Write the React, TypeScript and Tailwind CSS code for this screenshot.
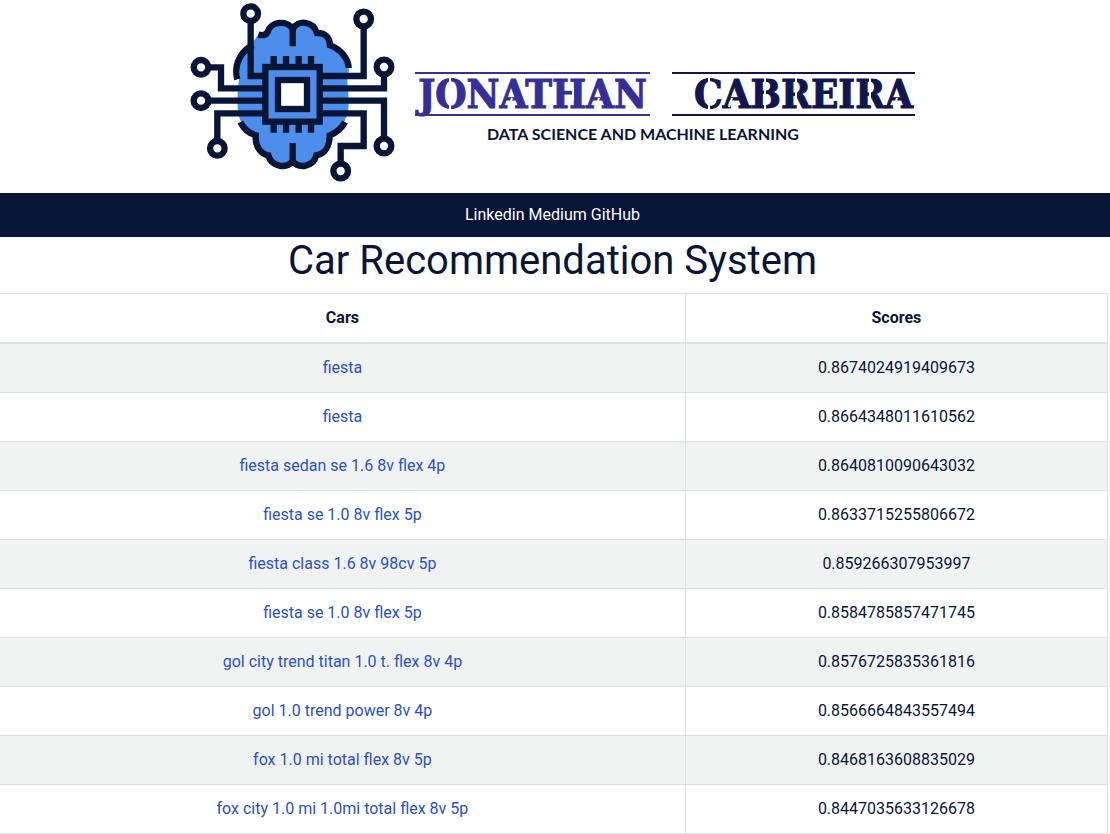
const cars: { name: string; score: string }[] = [
  { name: "fiesta", score: "0.8674024919409673" },
  { name: "fiesta", score: "0.8664348011610562" },
  { name: "fiesta sedan se 1.6 8v flex 4p", score: "0.8640810090643032" },
  { name: "fiesta se 1.0 8v flex 5p", score: "0.8633715255806672" },
  { name: "fiesta class 1.6 8v 98cv 5p", score: "0.859266307953997" },
  { name: "fiesta se 1.0 8v flex 5p", score: "0.8584785857471745" },
  { name: "gol city trend titan 1.0 t. flex 8v 4p", score: "0.8576725835361816" },
  { name: "gol 1.0 trend power 8v 4p", score: "0.8566664843557494" },
  { name: "fox 1.0 mi total flex 8v 5p", score: "0.8468163608835029" },
  { name: "fox city 1.0 mi 1.0mi total flex 8v 5p", score: "0.8447035633126678" },
];

const nodes: [number, number][] = [
  [197, 41],
  [536, 57],
  [597, 201],
  [48, 202],
  [48, 302],
  [97, 445],
  [467, 513],
  [597, 438],
];

function BrainLogo() {
  return (
    <svg className="h-[190px] w-[215px] shrink-0" viewBox="0 0 645 570" fill="none" aria-hidden="true">
      <path
        fill="#4d8dec"
        d="M210 118C225 92 240 100 252 88C268 60 308 62 323 86C340 62 378 62 392 96C414 94 430 112 434 136C464 146 492 180 492 214C482 235 490 255 491 300C492 340 484 350 476 370C464 390 450 400 434 408C434 440 418 460 394 466C386 500 342 502 323 480C304 502 260 500 252 466C226 460 212 440 212 408C190 398 166 368 162 350C154 325 158 260 164 225C158 190 178 150 210 118Z"
      />
      <g stroke="#091536" strokeWidth="19">
        <path d="M220 104C236 108 244 104 248 96C256 64 308 58 323 88C338 58 384 62 396 99C420 98 434 112 435 136C464 146 490 174 491 204" />
        <path d="M323 84V139M205 135C172 150 144 190 157 238M323 429V486" />
        <path d="M166 366C176 386 192 400 212 406C210 438 226 462 250 466C258 500 304 508 323 484C342 508 386 500 394 466C420 462 434 438 434 406C454 398 470 386 480 366" />
        <path d="M197 68V228H240M405 228H536V84M405 265H597V228M75 202H108V265H240M75 302H240M97 418V340H240M405 340H536V438H467V486M405 302H597V411" />
        <path d="M266 168V200M303 168V200M341 168V200M378 168V200M266 368V398M303 368V398M341 368V398M378 368V398" />
        <rect x="241" y="201" width="163" height="164" fill="#4d8dec" />
        <rect x="279" y="240" width="87" height="87" fill="#fff" />
        {nodes.map(([cx, cy]) => (
          <circle key={`${cx}-${cy}`} cx={cx} cy={cy} r="22" fill="#fff" />
        ))}
      </g>
    </svg>
  );
}

/* Thin white breaks over the letters give the wordmark its stencil look. */
function StencilCuts({ d }: { d: string }) {
  return (
    <svg className="absolute inset-0 h-full w-full" fill="none" stroke="#fff" strokeWidth="2" aria-hidden="true">
      <path d={d} />
    </svg>
  );
}

function Wordmark() {
  return (
    <div className="mt-[25px] flex flex-col items-center">
      <div className="flex gap-[22px] font-['DejaVu_Serif_Condensed','DejaVu_Serif',serif] text-[40px] leading-[40px] font-bold">
        <span className="relative w-[235px] border-y-2 border-[#352f98] text-center text-[#352f98] [-webkit-text-stroke:1px_#352f98]">
          JONATHAN
          <StencilCuts d="M35 4V38M97 24L94 33M158 14V26M184 24L181 33" />
        </span>
        <span className="relative w-[243px] border-y-2 border-[#11164f] pr-[2px] text-right text-[#11164f] [-webkit-text-stroke:1px_#11164f]">
          CABREIRA
          <StencilCuts d="M37 4V38M60 24L57 33M93 4V38M124 4V24M198 4V24M225 24L222 33" />
        </span>
      </div>
      <span className="mt-2 pr-[44px] font-[Lato,sans-serif] text-[16px] leading-[20px] font-bold text-[#091536]">
        DATA SCIENCE AND MACHINE LEARNING
      </span>
    </div>
  );
}

export default function App() {
  return (
    <div className="min-h-screen overflow-x-hidden bg-white font-[Roboto,sans-serif] text-[16px] leading-[24px] text-[#091536]">
      <header className="flex items-center justify-center pr-[10px] pb-[3px]">
        <BrainLogo />
        <div className="ml-[15px]">
          <Wordmark />
        </div>
      </header>
      <nav className="flex justify-center gap-1 bg-[#091536] py-[10px] pr-[5px] text-white">
        <a href="#linkedin">Linkedin</a>
        <a href="#medium">Medium</a>
        <a href="#github">GitHub</a>
      </nav>
      <main>
        <h1 className="mb-2 pr-[5px] text-center text-[40px] leading-[48px]">Car Recommendation System</h1>
        <div className="-ml-px pr-[2px]">
          <table className="w-full table-fixed border-collapse border border-[#dee2e6] text-center">
            <colgroup>
              <col className="w-[61.9%]" />
              <col />
            </colgroup>
            <thead>
              <tr className="border-b-2 border-[#dee2e6]">
                <th className="border-r border-[#dee2e6] py-3">Cars</th>
                <th className="py-3">Scores</th>
              </tr>
            </thead>
            <tbody>
              {cars.map((car, i) => (
                <tr key={i} className="border-b border-[#dee2e6] odd:bg-[#f1f3f3]">
                  <td className="border-r border-[#dee2e6] py-3">
                    <a href="#car" className="text-[#2a50c4]">
                      {car.name}
                    </a>
                  </td>
                  <td className="py-3">{car.score}</td>
                </tr>
              ))}
            </tbody>
          </table>
        </div>
      </main>
    </div>
  );
}
